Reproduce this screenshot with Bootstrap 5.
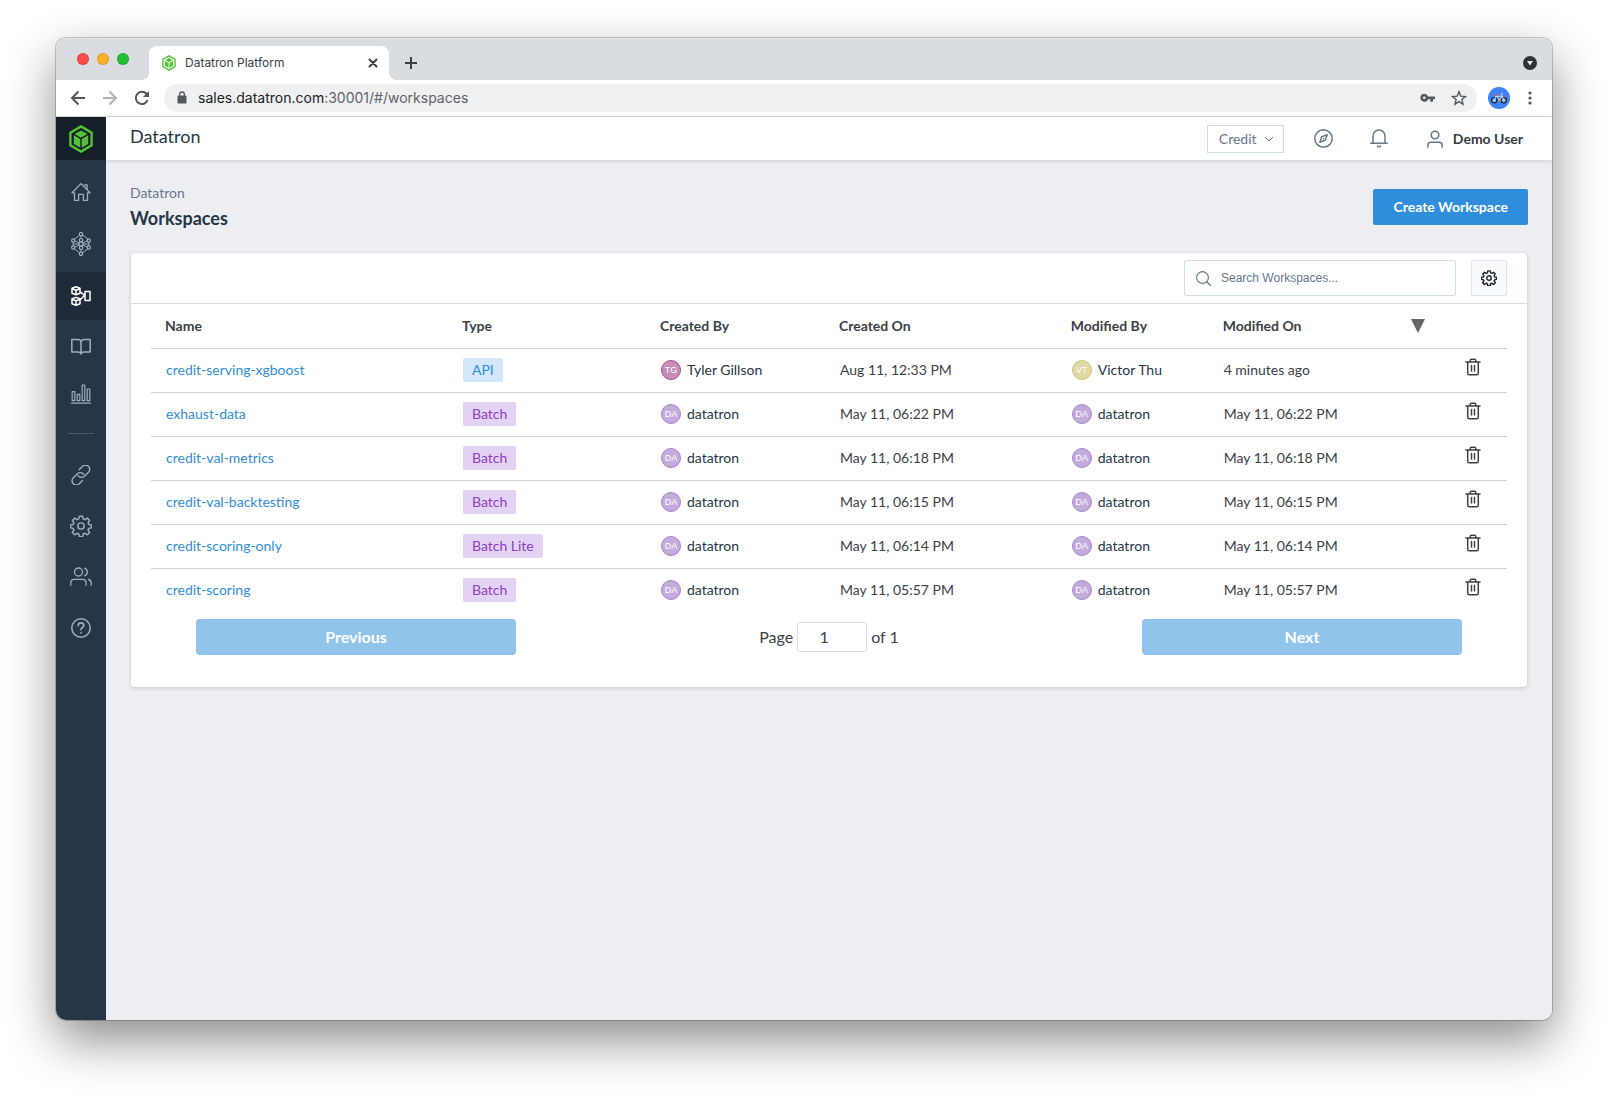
<!DOCTYPE html>
<html lang="en">
<head>
<meta charset="utf-8">
<meta name="viewport" content="width=device-width, initial-scale=1">
<title>Datatron Platform</title>
<link href="https://cdn.jsdelivr.net/npm/bootstrap@5.3.0/dist/css/bootstrap.min.css" rel="stylesheet">
<style>
  body { font-family: Lato, sans-serif; font-size: 14px; line-height: 20px; color: #3b4147; background: #fff; padding: 38px 56px 74px; min-height: 100vh; }
  svg { display: block; flex: none; }
  .ic { fill: none; stroke: currentColor; stroke-linecap: round; stroke-linejoin: round; }
  .plain-btn { border: 0; background: none; padding: 0; color: inherit; display: flex; align-items: center; justify-content: center; }

  /* browser window */
  .win { min-height: calc(100vh - 112px); border-radius: 10px; overflow: hidden; background: #edeef2; }
  .win-shadow { border-radius: 10px; box-shadow: 0 0 0 1px rgba(0,0,0,.2), 0 20px 50px rgba(0,0,0,.46); }
  .tabstrip { height: 42px; background: #d9dce1; box-shadow: inset 0 1px 0 #e4e6e9; padding: 0 15px 0 21px; }
  .dot { width: 12px; height: 12px; border-radius: 50%; border: 1px solid rgba(0,0,0,.12); }
  .tab { position: relative; width: 240px; height: 34px; margin-left: 20px; padding: 0 11px 0 12px; border-radius: 8px 8px 0 0; background: #fff; color: #3c4043; font: 12px/20px Inter, sans-serif; }
  .tab::before, .tab::after { content: ""; position: absolute; bottom: 0; width: 8px; height: 8px; }
  .tab::before { right: 100%; background: radial-gradient(circle at 0 0, transparent 8px, #fff 8px); }
  .tab::after { left: 100%; background: radial-gradient(circle at 100% 0, transparent 8px, #fff 8px); }
  .toolbar { height: 37px; background: #fff; border-bottom: 1px solid #d3d5d8; padding: 0 20px 0 14px; color: #54585d; }
  .omni { height: 28px; border-radius: 14px; background: #eff0f2; padding: 0 10px 0 12px; margin-left: 14px; }
  .url { font: 14px/20px Inter, sans-serif; color: #5f6368; }
  .url b { font-weight: 400; color: #202124; }

  /* side navigation */
  .side { width: 50px; background: #273646; color: #a1adbd; }
  .side-logo { height: 43px; background: #16202a; }
  .side a { height: 48px; color: inherit; display: flex; align-items: center; justify-content: center; }
  .side a.current { background: #1f2b38; color: #fff; }
  .side-group { display: flex; flex-direction: column; }
  .side-rule { width: 26px; height: 1px; background: #4a5a6b; margin: 15px auto 17px; }

  /* application header */
  .apphead { height: 43px; background: #fff; padding: 0 29px 0 24px; box-shadow: 0 1px 4px rgba(30,40,60,.16); color: #64778d; }
  .brand { font-size: 18px; line-height: 24px; color: #273646; padding-bottom: 6px; }
  .team { width: 77px; height: 28px; border: 1px solid #cfdde6; border-radius: 0; padding: 0 24px 0 11px; font-size: 14px; line-height: 20px; color: #64778d; background-size: 10px 10px; background-position: right 9px center;
    background-image: url("data:image/svg+xml,%3Csvg xmlns='http://www.w3.org/2000/svg' viewBox='0 0 10 10'%3E%3Cpath d='M1 3l4 4 4-4' fill='none' stroke='%2364778d'/%3E%3C/svg%3E"); }
  .who { color: #353c43; font-size: 14px; font-weight: 700; }

  .page { padding: 22px 24px; }
  .crumb { color: #64778d; line-height: 22px; }
  .ttl { font-size: 18px; line-height: 28px; font-weight: 700; color: #273646; margin: 0; }
  .create { height: 36px; padding: 0 20px; border: 0; border-radius: 2px; background: #2f8ddb; color: #fff; font-size: 14px; font-weight: 700; }
  .panel { margin: 21px 1px 0; background: #fff; border-radius: 4px; box-shadow: 0 1px 4px rgba(30,40,60,.2); }
  .panel-tools { height: 51px; border-bottom: 1px solid #d3dfe8; padding: 0 20px; }
  .find { width: 272px; height: 36px; border: 1px solid #cfdde6; border-radius: 2px; padding: 0 11px; color: #64778d; }
  .find input { border: 0; outline: 0; width: 100%; font: 12px/20px "Liberation Sans", sans-serif; padding: 0; margin-left: 10px; }
  .find input::placeholder { color: #64778d; opacity: 1; }
  .gear { width: 36px; height: 36px; border: 1px solid #dbe4f0; border-radius: 2px; background: #f9fafc; color: #23292f; }

  .grid-wrap { padding: 0 20px; }
  .grid { table-layout: fixed; margin: 0; color: #3b4147; --bs-table-bg: transparent; --bs-table-color: #3b4147; }
  .grid > :not(caption) > * > * { height: 44px; padding: 0 15px; vertical-align: middle; border-bottom: 1px solid #d0d3dc; }
  .grid > thead > tr > th { padding: 0 14px; font-weight: 700; }
  .grid > tbody > tr:last-child > td { border-bottom: 0; }
  .grid a { color: #2f8ddb; text-decoration: none; }
  .kind { display: inline-block; padding: 2px 9px; border-radius: 2px; background: #e3d3f3; color: #8f3cc6; }
  .kind.api { background: #d3e7f8; color: #2f8ddb; }
  .face { width: 20px; height: 20px; border-radius: 50%; border: 1px solid #a584cc; background: #c3acdc; color: #fff; font: 9px/18px "Liberation Sans", sans-serif; text-align: center; margin-right: 6px; }
  .face.tg { background: #c58db8; border-color: #a8508f; }
  .face.vt { background: #dfd9a5; border-color: #cfc678; }
  .person { color: #273646; }
  .bin { margin: 0 auto; padding-bottom: 6px; }

  .pager { padding: 7px 45px 32px; font-size: 16px; }
  .pager .step { width: 320px; height: 36px; border: 0; border-radius: 4px; background: #90c4ea; color: #fff; font-weight: 700; font-size: 16px; opacity: 1; }
  .pager .num { width: 70px; height: 30px; border: 1px solid #dedede; border-radius: 3px; text-align: center; color: #3b4147; padding: 0 16px 2px 0; }
</style>
<script src="https://cdn.jsdelivr.net/npm/bootstrap@5.3.0/dist/js/bootstrap.bundle.min.js"></script>
</head>
<body>
<svg width="0" height="0" class="position-absolute" aria-hidden="true">
  <symbol id="cube" viewBox="0 0 24 28">
    <path d="M12 1.4 22.6 7.6V20.4L12 26.6 1.4 20.4V7.6z" fill="none" stroke="#55c138" stroke-width="2.4"/>
    <path d="M12 5.4 18.4 9.1 12 12.7 5.6 9.1zM4.8 10.3 11.3 14v8.7L4.8 18.9zM19.2 10.3 12.7 14v8.7l6.500-3.800z" fill="#55c138"/>
  </symbol>
  <symbol id="cog" viewBox="0 0 24 24">
    <circle cx="12" cy="12" r="3.400"/>
    <path d="M10.200 1.300h3.600l.6 3 1.900.8 2.600-1.700 2.500 2.500-1.700 2.600.8 1.900 3 .6v2.900l-3 .7-.8 1.900 1.700 2.500-2.500 2.600-2.600-1.700-1.900.8-.6 3h-3.600l-.6-3-1.900-.8-2.600 1.700-2.500-2.600 1.700-2.500-.8-1.900-3-.7V11l3-.6.8-1.900-1.700-2.600 2.500-2.500 2.600 1.700 1.900-.8z"/>
  </symbol>
  <symbol id="bin" viewBox="0 0 16 18">
    <path d="M1 4h14M5.200 3.800V2.600c0-.9.6-1.400 1.400-1.400h2.800c.8 0 1.400.5 1.400 1.400v1.200M2.700 4.200v11c0 1 .6 1.600 1.600 1.600h7.400c1 0 1.600-.6 1.600-1.600v-11M6.500 7.500v5.500M9.500 7.500v5.500"/>
  </symbol>
</svg>

<div class="win-shadow">
<div class="win d-flex flex-column">

  <div class="tabstrip d-flex align-items-end">
    <div class="d-flex align-self-center gap-2">
      <span class="dot" style="background:#fc4b48"></span>
      <span class="dot" style="background:#fdb024"></span>
      <span class="dot" style="background:#23bf36"></span>
    </div>
    <div class="tab d-flex align-items-center">
      <svg width="16" height="16"><use href="#cube"/></svg>
      <span class="ms-2 flex-grow-1">Datatron Platform</span>
      <button class="plain-btn" aria-label="Close tab"><svg class="ic" width="10" height="10" viewBox="0 0 10 10" stroke-width="2" style="color:#3c4043"><path d="M1.500 1.500l7 7M8.500 1.500l-7 7"/></svg></button>
    </div>
    <div class="d-flex align-items-center flex-grow-1 justify-content-between" style="height:34px">
      <button class="plain-btn ms-3" aria-label="New tab"><svg width="12" height="12" viewBox="0 0 12 12" fill="none" stroke="#3c4043" stroke-width="2"><path d="M6 0v12M0 6h12"/></svg></button>
      <button class="plain-btn" aria-label="Search tabs"><svg width="14" height="14" viewBox="0 0 14 14"><circle cx="7" cy="7" r="7" fill="#2f3337"/><path d="M4 5h6L7 9.500z" fill="#e8eaed"/></svg></button>
    </div>
  </div>

  <div class="toolbar d-flex align-items-center">
    <button class="plain-btn" aria-label="Back"><svg width="16" height="16" viewBox="0 0 16 16" fill="none" stroke="#54585d" stroke-width="2"><path d="M15 8H2.500M8.500 1.500 2 8l6.500 6.500"/></svg></button>
    <button class="plain-btn ms-3" aria-label="Forward"><svg width="16" height="16" viewBox="0 0 16 16" fill="none" stroke="#b1b4b8" stroke-width="2"><path d="M1 8h12.500M7.500 1.500 14 8l-6.500 6.500"/></svg></button>
    <button class="plain-btn ms-3" aria-label="Reload"><svg width="16" height="16" viewBox="0 0 16 16"><path d="M13.600 10.200A6.100 6.100 0 1 1 12.400 3.800L14 5.400" fill="none" stroke="#54585d" stroke-width="2"/><path d="M15 .9V7H8.900z" fill="#54585d"/></svg></button>
    <div class="omni d-flex align-items-center flex-grow-1">
      <svg width="12" height="14" viewBox="0 0 12 14"><rect x="1.500" y="4.600" width="9" height="7.900" rx="1" fill="#54585d"/><path d="M3.600 5V3.400a2.400 2.400 0 0 1 4.800 0V5" fill="none" stroke="#54585d" stroke-width="1.300"/></svg>
      <div class="url flex-grow-1" style="margin-left:10px"><b>sales.datatron.com</b>:30001/#/workspaces</div>
      <button class="plain-btn" aria-label="Saved passwords"><svg width="15" height="10" viewBox="0 0 15 10"><path d="M4.300.7a4 4 0 1 0 3.800 5.500h2.200v2.500h2.700V6.200H15V3.400H8.100A4 4 0 0 0 4.300.7zm0 2.700a1.300 1.300 0 1 1 0 2.700 1.300 1.300 0 0 1 0-2.700z" fill="#54585d"/></svg></button>
      <button class="plain-btn ms-3" aria-label="Bookmark"><svg width="16" height="16" viewBox="0 0 16 16" fill="none" stroke="#54585d" stroke-width="1.400"><path d="M8 1.700l1.800 4.400 4.700.4-3.600 3 1.100 4.700L8 11.700l-4 2.500 1.100-4.700-3.600-3 4.700-.4z"/></svg></button>
    </div>
    <button class="plain-btn" style="margin-left:11px" aria-label="Profile">
      <svg width="22" height="22" viewBox="0 0 22 22"><circle cx="11" cy="11" r="11" fill="#3f82fb"/><g fill="none"><circle cx="6.200" cy="13.300" r="2.600" fill="#8fc0f7" stroke="#20242b" stroke-width="1.300"/><circle cx="15.800" cy="13.300" r="2.600" fill="#8fc0f7" stroke="#20242b" stroke-width="1.300"/><path d="M6.200 13.300l2-4.300 3.300 4.200 3-4.200M8.200 9.300h5.500M15.800 13.300 13.200 6.800l1.600-.6" stroke="#c5dbf0" stroke-width="1"/><path d="M6.500 8h3M15 8.300l1.800 1.300" stroke="#e0564d" stroke-width="1.400"/><path d="M10.500 13.400h2" stroke="#e9a13c" stroke-width="1.500"/></g></svg>
    </button>
    <button class="plain-btn" style="margin-left:18px" aria-label="Menu"><svg width="4" height="14" viewBox="0 0 4 14" fill="#54585d"><circle cx="2" cy="2" r="1.600"/><circle cx="2" cy="7" r="1.600"/><circle cx="2" cy="12" r="1.600"/></svg></button>
  </div>

  <div class="d-flex flex-grow-1">
    <nav class="side flex-shrink-0" aria-label="Main">
      <div class="side-logo d-flex align-items-center justify-content-center"><svg width="24" height="28"><use href="#cube"/></svg></div>
      <div class="side-group gap-1 pt-2">
        <a href="#" aria-label="Home"><svg class="ic" width="20" height="20" viewBox="0 0 20 20" stroke-width="1.300"><path d="M1 10.800 10 1.600l9 9.200h-2.500v7.600h-4.100v-6H7.600v6H3.500v-7.600zM13.500 3h2.600v4.800"/></svg></a>
        <a href="#" aria-label="Models"><svg class="ic" width="20" height="24" viewBox="0 0 20 24" stroke-width="1"><path d="M10 2.500v19M10 2.200 2.200 8v8l7.800 5.800 7.800-5.800V8zM2.200 8l7.800 4 7.800-4M2.200 16l7.800-4 7.800 4M2.200 12h15.600"/><g fill="#273646" stroke-width="1.200"><circle cx="10" cy="2.200" r="1.700"/><circle cx="10" cy="21.800" r="1.700"/><circle cx="2.200" cy="8.500" r="1.600"/><circle cx="17.800" cy="8.500" r="1.600"/><circle cx="2.200" cy="15.500" r="1.600"/><circle cx="17.800" cy="15.500" r="1.600"/><circle cx="10" cy="8.200" r="1.700"/><circle cx="10" cy="12" r="2"/><circle cx="10" cy="15.800" r="1.700"/></g></svg></a>
        <a href="#" class="current" aria-label="Workspaces" aria-current="page"><svg class="ic" width="20" height="20" viewBox="0 0 20 20" stroke-width="1.500"><path d="M1 2.200 5 .8l4 1.400v5L5 8.700 1 7.200zM1 2.700l4 1.500 4-1.500M5 4.200v4.300M1 12.800l4-1.400 4 1.400v5l-4 1.400-4-1.400zM1 13.300l4 1.500 4-1.500M5 14.800v4.200M9.500 6l4 3.500-4 4M14 5.500h5v9h-5z"/></svg></a>
      </div>
      <div class="side-group" style="margin-top:2px">
        <a href="#" aria-label="Catalog"><svg class="ic" width="20" height="17" viewBox="0 0 20 17" stroke-width="1.500"><path d="M10 15.800c-.6-1.200-1.600-1.800-3-1.800H.8V1.500H7c1.800 0 3 1.200 3 2.800 0-1.600 1.200-2.800 3-2.800h6.200V14H13c-1.400 0-2.400.6-3 1.800zM10 4v11"/></svg></a>
        <a href="#" aria-label="Metrics"><svg class="ic" width="20" height="20" viewBox="0 0 20 20" stroke-width="1.200"><path d="M.6 19.200h18.800M1.200 16.600v-9h2.600v9zM6.200 16.600v-6.200h2.600v6.200zM11.200 16.600V1h2.600v15.600zM16.200 16.600V5h2.600v11.600z"/></svg></a>
      </div>
      <div class="side-rule"></div>
      <div class="side-group" style="gap:3px">
        <a href="#" aria-label="Connections"><svg class="ic" width="20" height="20" viewBox="0 0 20 20" stroke-width="1.400"><path d="M7.200 10.700a4.200 4.200 0 0 0 6.200.5l4.300-4.300A4.200 4.200 0 0 0 11.800 1L8.300 4.500M12.600 9.300a4.200 4.200 0 0 0-6.200-.5l-4.300 4.300a4.200 4.200 0 0 0 5.900 5.900l3.500-3.500"/></svg></a>
        <a href="#" aria-label="Settings"><svg class="ic" width="22" height="22" stroke-width="1.600"><use href="#cog"/></svg></a>
        <a href="#" aria-label="Users"><svg class="ic" width="22" height="20" viewBox="0 0 22 20" stroke-width="1.300"><circle cx="8.500" cy="5" r="4"/><path d="M.8 18.300v-2.500c0-2 1.400-3.400 3.400-3.400h8.400c2 0 3.400 1.400 3.400 3.400v2.500M14.500 1.100a4.100 4.100 0 0 1 0 7.800M18.400 12.500c1.700.4 2.800 1.700 2.800 3.400v2.400"/></svg></a>
        <a href="#" aria-label="Help"><svg class="ic" width="20" height="20" viewBox="0 0 20 20" stroke-width="1.500"><circle cx="10" cy="10" r="9.200"/><path d="M7.200 7.600c0-1.700 1.200-2.800 2.800-2.800s2.800 1.100 2.800 2.600c0 2-2.800 2.100-2.800 4.100M10 14.700v.1" stroke-width="1.700"/></svg></a>
      </div>
    </nav>

    <div class="flex-grow-1">
      <header class="apphead d-flex align-items-center">
        <div class="brand me-auto">Datatron</div>
        <select class="form-select team" aria-label="Team"><option>Credit</option></select>
        <button class="plain-btn" style="margin-left:30px" aria-label="Explore"><svg class="ic" width="19" height="19" viewBox="0 0 19 19" stroke-width="1.500"><circle cx="9.500" cy="9.500" r="8.700"/><path d="M13.200 5.800 11.200 11.200 5.800 13.200 7.800 7.800zM9.500 9.500h.1"/></svg></button>
        <button class="plain-btn" style="margin-left:37px" aria-label="Notifications"><svg class="ic" width="18" height="19" viewBox="0 0 18 19" stroke-width="1.500"><path d="M.8 14.200H17.200M3 14V7a6 6 0 0 1 12 0v7M7.400 17a2 2 0 0 0 3.200 0"/></svg></button>
        <button class="plain-btn" style="margin-left:39px"><svg class="ic" width="16" height="18" viewBox="0 0 16 18" stroke-width="1.500"><circle cx="8" cy="5" r="3.800"/><path d="M.8 17v-1.600c0-1.900 1.300-3.200 3.200-3.200h8c1.900 0 3.200 1.300 3.200 3.200V17"/></svg><span class="who" style="margin-left:10px">Demo User</span></button>
      </header>

      <main class="page">
        <div class="d-flex justify-content-between align-items-center">
          <div>
            <div class="crumb">Datatron</div>
            <h1 class="ttl">Workspaces</h1>
          </div>
          <button class="create">Create Workspace</button>
        </div>

        <section class="panel">
          <div class="panel-tools d-flex align-items-center justify-content-end">
            <label class="find d-flex align-items-center">
              <svg class="ic" width="15" height="15" viewBox="0 0 15 15" stroke-width="1.200"><circle cx="6.500" cy="6.500" r="5.900"/><path d="M11 11l3.500 3.500"/></svg>
              <input type="text" placeholder="Search Workspaces..." aria-label="Search Workspaces">
            </label>
            <button class="plain-btn gear" style="margin-left:15px" aria-label="Table settings"><svg class="ic" width="16" height="16" stroke-width="2.200"><use href="#cog"/></svg></button>
          </div>
          <div class="grid-wrap">
            <table class="table grid">
              <colgroup><col style="width:21.9%"><col style="width:14.6%"><col style="width:13.2%"><col style="width:17.1%"><col style="width:11.2%"><col style="width:17%"><col style="width:5%"></colgroup>
              <thead>
                <tr><th>Name</th><th>Type</th><th>Created By</th><th>Created On</th><th>Modified By</th>
                  <th><div class="d-flex align-items-center justify-content-between">Modified On<svg width="14" height="14" viewBox="0 0 14 14"><path d="M0 0h14L7 14z" fill="#666"/></svg></div></th><th aria-label="Actions"></th></tr>
              </thead>
              <tbody>
                <tr><td><a href="#">credit-serving-xgboost</a></td><td><span class="kind api">API</span></td><td><div class="person d-flex"><span class="face tg">TG</span>Tyler Gillson</div></td><td>Aug 11, 12:33 PM</td><td><div class="person d-flex"><span class="face vt">VT</span>Victor Thu</div></td><td>4 minutes ago</td><td><button class="plain-btn bin" aria-label="Delete"><svg class="ic" width="16" height="18" stroke-width="1.500"><use href="#bin"/></svg></button></td></tr>
                <tr><td><a href="#">exhaust-data</a></td><td><span class="kind">Batch</span></td><td><div class="person d-flex"><span class="face">DA</span>datatron</div></td><td>May 11, 06:22 PM</td><td><div class="person d-flex"><span class="face">DA</span>datatron</div></td><td>May 11, 06:22 PM</td><td><button class="plain-btn bin" aria-label="Delete"><svg class="ic" width="16" height="18" stroke-width="1.500"><use href="#bin"/></svg></button></td></tr>
                <tr><td><a href="#">credit-val-metrics</a></td><td><span class="kind">Batch</span></td><td><div class="person d-flex"><span class="face">DA</span>datatron</div></td><td>May 11, 06:18 PM</td><td><div class="person d-flex"><span class="face">DA</span>datatron</div></td><td>May 11, 06:18 PM</td><td><button class="plain-btn bin" aria-label="Delete"><svg class="ic" width="16" height="18" stroke-width="1.500"><use href="#bin"/></svg></button></td></tr>
                <tr><td><a href="#">credit-val-backtesting</a></td><td><span class="kind">Batch</span></td><td><div class="person d-flex"><span class="face">DA</span>datatron</div></td><td>May 11, 06:15 PM</td><td><div class="person d-flex"><span class="face">DA</span>datatron</div></td><td>May 11, 06:15 PM</td><td><button class="plain-btn bin" aria-label="Delete"><svg class="ic" width="16" height="18" stroke-width="1.500"><use href="#bin"/></svg></button></td></tr>
                <tr><td><a href="#">credit-scoring-only</a></td><td><span class="kind">Batch Lite</span></td><td><div class="person d-flex"><span class="face">DA</span>datatron</div></td><td>May 11, 06:14 PM</td><td><div class="person d-flex"><span class="face">DA</span>datatron</div></td><td>May 11, 06:14 PM</td><td><button class="plain-btn bin" aria-label="Delete"><svg class="ic" width="16" height="18" stroke-width="1.500"><use href="#bin"/></svg></button></td></tr>
                <tr><td><a href="#">credit-scoring</a></td><td><span class="kind">Batch</span></td><td><div class="person d-flex"><span class="face">DA</span>datatron</div></td><td>May 11, 05:57 PM</td><td><div class="person d-flex"><span class="face">DA</span>datatron</div></td><td>May 11, 05:57 PM</td><td><button class="plain-btn bin" aria-label="Delete"><svg class="ic" width="16" height="18" stroke-width="1.500"><use href="#bin"/></svg></button></td></tr>
              </tbody>
            </table>
            <div class="pager d-flex align-items-center justify-content-between">
              <button class="step" disabled>Previous</button>
              <label class="d-flex align-items-center gap-1">Page <input class="num" type="text" value="1"> of 1</label>
              <button class="step" disabled>Next</button>
            </div>
          </div>
        </section>
      </main>
    </div>
  </div>
</div>
</div>
</body>
</html>
